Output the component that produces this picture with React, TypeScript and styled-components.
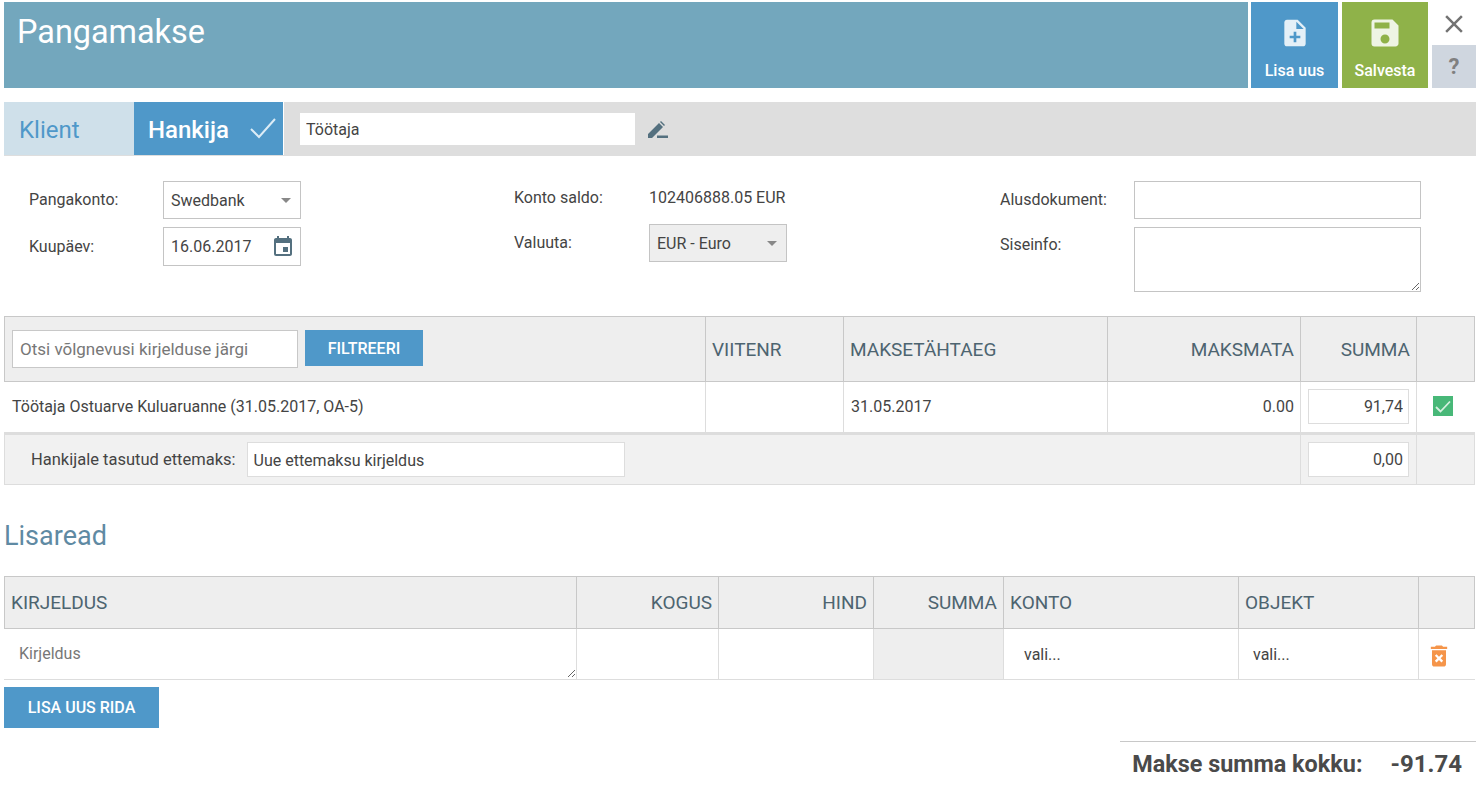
import React from 'react';
import styled, { createGlobalStyle } from 'styled-components';
import { MdNoteAdd, MdSave, MdClose, MdEvent, MdDeleteForever } from 'react-icons/md';

const GlobalStyle = createGlobalStyle`
  html, body { margin: 0; padding: 0; background: #fff; }
  body { font-family: Roboto, "Liberation Sans", sans-serif; color: #444; font-size: 16px; }
  * { box-sizing: border-box; }
  input, textarea, button { font-family: inherit; }
`;

const Page = styled.div`
  width: 1480px;
  height: 804px;
  padding: 2px 4px 0;
  overflow: hidden;
`;

const TopBar = styled.div`
  display: flex;
  height: 86px;
`;

const TitleBar = styled.div`
  width: 1244px;
  background: #73a7bd;
  color: #fff;
  font-size: 32.4px;
  line-height: 38px;
  padding: 11px 13px;
`;

const ActionButton = styled.div<{ $bg: string; $width: number; $gap: number }>`
  width: ${(p) => p.$width}px;
  margin-left: ${(p) => p.$gap}px;
  background: ${(p) => p.$bg};
  color: #fff;
  font-size: 16px;
  font-weight: 500;
  display: flex;
  flex-direction: column;
  align-items: center;
  padding-top: 15px;
  gap: 12px;
  svg { color: rgba(255, 255, 255, 0.85); }
`;

const IconSlot = styled.div`
  height: 32px;
  display: flex;
  align-items: center;
  justify-content: center;
`;

const SideActions = styled.div`
  width: 44px;
  margin-left: 4px;
  display: flex;
  flex-direction: column;
`;

const CloseBox = styled.div`
  height: 43px;
  display: flex;
  align-items: center;
  justify-content: center;
  color: #737373;
`;

const HelpBox = styled.div`
  height: 43px;
  background: #cfd6df;
  color: #808080;
  font-size: 22px;
  font-weight: 700;
  display: flex;
  align-items: center;
  justify-content: center;
`;

const PartyBar = styled.div`
  margin-top: 14px;
  height: 54px;
  background: #dedede;
  display: flex;
  align-items: stretch;
`;

const PartyTab = styled.div<{ $active?: boolean }>`
  width: ${(p) => (p.$active ? 150 : 130)}px;
  height: 53px;
  background: ${(p) => (p.$active ? '#4f98c9' : '#cfe0ea')};
  color: ${(p) => (p.$active ? '#fff' : '#4f98c9')};
  border-right: ${(p) => (p.$active ? '1px solid #fff' : '0')};
  font-size: 24px;
  font-weight: ${(p) => (p.$active ? 500 : 400)};
  display: flex;
  align-items: center;
  justify-content: space-between;
  padding: 2px 6px 0 ${(p) => (p.$active ? 14 : 15)}px;
  svg { margin-top: -3px; }
`;

const PartyInput = styled.input`
  width: 335px;
  height: 32px;
  margin: 11px 0 0 16px;
  border: 0;
  background: #fff;
  padding: 0 6px;
  font-size: 16px;
  color: #444;
  outline: none;
`;

const EditIcon = styled.div`
  margin: 19px 0 0 13px;
`;

const FormGrid = styled.div`
  margin-top: 25px;
  height: 135px;
  display: grid;
  grid-template-columns: 485px 485px 1fr;
`;

const FormColumn = styled.div<{ $left: number }>`
  padding-left: ${(p) => p.$left}px;
  display: flex;
  flex-direction: column;
  gap: 8px;
`;

const FormRow = styled.div<{ $height: number }>`
  display: flex;
  align-items: flex-start;
  height: ${(p) => p.$height}px;
`;

const FormLabel = styled.div<{ $width: number; $top?: number }>`
  width: ${(p) => p.$width}px;
  font-size: 16px;
  line-height: 18px;
  padding-top: ${(p) => p.$top ?? 10}px;
  color: #444;
`;

const FieldBox = styled.div<{ $width: number; $height: number; $disabled?: boolean }>`
  width: ${(p) => p.$width}px;
  height: ${(p) => p.$height}px;
  border: 1px solid #c4c4c4;
  background: ${(p) => (p.$disabled ? '#eee' : '#fff')};
  display: flex;
  align-items: center;
  justify-content: space-between;
  padding: 0 7px;
  font-size: 16px;
  color: #444;
`;

const Caret = styled.span`
  width: 0;
  height: 0;
  margin-right: 2px;
  border-left: 5px solid transparent;
  border-right: 5px solid transparent;
  border-top: 5px solid #888;
`;

const PlainValue = styled.div`
  font-size: 16px;
  line-height: 18px;
  padding-top: 8px;
`;

const TextArea = styled.textarea`
  display: block;
  width: 287px;
  height: 65px;
  border: 1px solid #c4c4c4;
  outline: none;
  background: #fff;
`;

const TextBox = styled.input`
  display: block;
  width: 287px;
  height: 38px;
  border: 1px solid #c4c4c4;
  outline: none;
  background: #fff;
`;

const Row = styled.div<{ $cols: string; $height: number; $bg?: string; $border: string; $top?: string; $thick?: boolean }>`
  display: grid;
  width: 1471px;
  grid-template-columns: ${(p) => p.$cols};
  height: ${(p) => p.$height}px;
  background: ${(p) => p.$bg ?? '#fff'};
  border-bottom: ${(p) => (p.$thick ? 3 : 1)}px solid ${(p) => p.$border};
  ${(p) => (p.$top ? `border-top: ${p.$top};` : '')}
  ${(p) => (p.$thick ? '& > div { padding-bottom: 2px; }' : '')}
`;

const Cell = styled.div<{ $right?: boolean; $line: string; $pad?: number; $bg?: string; $open?: boolean; $span?: number }>`
  display: flex;
  align-items: center;
  justify-content: ${(p) => (p.$right ? 'flex-end' : 'flex-start')};
  padding: 0 ${(p) => p.$pad ?? 6}px;
  border-right: 1px solid ${(p) => p.$line};
  font-size: 16px;
  color: #444;
  background: ${(p) => p.$bg ?? 'transparent'};
  min-width: 0;
  ${(p) => (p.$span ? `grid-column: 1 / span ${p.$span};` : '')}
  &:first-child { border-left: 1px solid ${(p) => (p.$open ? 'transparent' : p.$line)}; }
`;

const HeadText = styled.span`
  font-size: 19px;
  color: #4d6470;
`;

const SearchInput = styled.input`
  width: 286px;
  height: 38px;
  border: 1px solid #c8c8c8;
  background: #fff;
  padding: 0 7px;
  font-size: 17px;
  outline: none;
  &::placeholder { color: #777; opacity: 1; }
`;

const BlueButton = styled.button<{ $width: number; $height: number }>`
  width: ${(p) => p.$width}px;
  height: ${(p) => p.$height}px;
  border: 0;
  background: #4f98c9;
  color: #fff;
  font-size: 16px;
  font-weight: 500;
  padding: 0;
`;

const FilterGap = styled.div`
  display: flex;
  align-items: flex-start;
  gap: 7px;
`;

const AmountInput = styled.input`
  width: 101px;
  height: 35px;
  border: 1px solid #ddd;
  background: #fff;
  padding: 0 5px;
  text-align: right;
  font-size: 16px;
  color: #444;
  outline: none;
`;

const CheckMark = styled.div`
  width: 20px;
  height: 20px;
  background: #48b878;
  margin-left: 16px;
  display: flex;
  align-items: center;
  justify-content: center;
`;

const AdvanceLabel = styled.span`
  margin: 0 11px 0 26px;
  color: #444;
  font-size: 16.5px;
`;

const AdvanceInput = styled.input`
  width: 378px;
  height: 35px;
  border: 1px solid #ddd;
  background: #fff;
  padding: 1px 6px 0;
  font-size: 16px;
  color: #444;
  outline: none;
`;

const SectionTitle = styled.h2`
  margin: 34px 0 0;
  height: 57px;
  font-size: 27px;
  line-height: 34px;
  font-weight: 400;
  color: #5f8aa3;
`;

const DescriptionArea = styled.textarea`
  width: 100%;
  height: 48px;
  border: 0;
  outline: none;
  resize: vertical;
  padding: 14px 14px 0;
  font-size: 16px;
  background: transparent;
  &::placeholder { color: #777; opacity: 1; }
`;

const TrashWrap = styled.div`
  color: #f5954a;
  margin-top: 3px;
  display: flex;
`;

const AddRow = styled.div`
  margin-top: 7px;
  height: 41px;
`;

const TotalBar = styled.div`
  margin: 13px 0 0 1116px;
  border-top: 1px solid #c8c8c8;
  height: 46px;
  display: flex;
  justify-content: flex-end;
  align-items: center;
  padding: 0 14px 2px 0;
  font-weight: 700;
  color: #4a4a4a;
  gap: 28px;
`;

const TotalLabel = styled.span`
  font-size: 23.4px;
`;

const TotalValue = styled.span`
  font-size: 24px;
`;

const tableCols = '702px 138px 264px 193px 116px 1fr';
const extraCols = '573px 142px 155px 130px 235px 180px 1fr';
const HEAD_LINE = '#c8c8c8';
const BODY_LINE = '#ddd';

const App: React.FunctionComponent = () => {
  return (
    <Page>
      <GlobalStyle />
      <TopBar>
        <TitleBar>Pangamakse</TitleBar>
        <ActionButton $bg='#4f98c9' $width={87} $gap={3}>
          <IconSlot><MdNoteAdd size={32} /></IconSlot>
          <span>Lisa uus</span>
        </ActionButton>
        <ActionButton $bg='#8fb249' $width={86} $gap={4}>
          <IconSlot><MdSave size={36} /></IconSlot>
          <span>Salvesta</span>
        </ActionButton>
        <SideActions>
          <CloseBox>
            <MdClose size={30} />
          </CloseBox>
          <HelpBox>?</HelpBox>
        </SideActions>
      </TopBar>

      <PartyBar>
        <PartyTab>Klient</PartyTab>
        <PartyTab $active>
          Hankija
          <svg width='28' height='24' viewBox='0 0 28 24' fill='none' stroke='#dcecf6' strokeWidth='2'>
            <path d='M2 13l8 8L26 3' />
          </svg>
        </PartyTab>
        <PartyInput defaultValue='Töötaja' />
        <EditIcon>
          <svg width='20' height='17' viewBox='0 0 20 17'>
            <path fill='#54707f' d='M0 17v-4L11 2l4 4L4 17z M12 1l1-1 4 4-1 1z' />
            <rect x='9' y='14.5' width='11' height='2.5' fill='#54707f' />
          </svg>
        </EditIcon>
      </PartyBar>

      <FormGrid>
        <FormColumn $left={25}>
          <FormRow $height={38}>
            <FormLabel $width={134}>Pangakonto:</FormLabel>
            <FieldBox $width={138} $height={38}>
              Swedbank
              <Caret />
            </FieldBox>
          </FormRow>
          <FormRow $height={39}>
            <FormLabel $width={134} $top={11}>Kuupäev:</FormLabel>
            <FieldBox $width={138} $height={39}>
              16.06.2017
              <MdEvent size={24} color='#54707f' style={{ marginRight: -2 }} />
            </FieldBox>
          </FormRow>
        </FormColumn>
        <FormColumn $left={25}>
          <FormRow $height={35}>
            <FormLabel $width={135} $top={8}>Konto saldo:</FormLabel>
            <PlainValue>102406888.05 EUR</PlainValue>
          </FormRow>
          <FormRow $height={38}>
            <FormLabel $width={135} $top={10}>Valuuta:</FormLabel>
            <FieldBox $width={138} $height={38} $disabled>
              EUR - Euro
              <Caret />
            </FieldBox>
          </FormRow>
        </FormColumn>
        <FormColumn $left={26}>
          <FormRow $height={38}>
            <FormLabel $width={134}>Alusdokument:</FormLabel>
            <TextBox />
          </FormRow>
          <FormRow $height={65}>
            <FormLabel $width={134} $top={9}>Siseinfo:</FormLabel>
            <TextArea />
          </FormRow>
        </FormColumn>
      </FormGrid>

      <Row $cols={tableCols} $height={66} $bg='#eee' $border={HEAD_LINE} $top={`1px solid ${HEAD_LINE}`}>
        <Cell $line={HEAD_LINE} $pad={7}>
          <FilterGap>
            <SearchInput placeholder='Otsi võlgnevusi kirjelduse järgi' />
            <BlueButton $width={118} $height={36}>FILTREERI</BlueButton>
          </FilterGap>
        </Cell>
        <Cell $line={HEAD_LINE}><HeadText>VIITENR</HeadText></Cell>
        <Cell $line={HEAD_LINE}><HeadText>MAKSETÄHTAEG</HeadText></Cell>
        <Cell $line={HEAD_LINE} $right><HeadText>MAKSMATA</HeadText></Cell>
        <Cell $line={HEAD_LINE} $right><HeadText>SUMMA</HeadText></Cell>
        <Cell $line={HEAD_LINE} />
      </Row>
      <Row $cols={tableCols} $height={53} $border={BODY_LINE} $thick>
        <Cell $line={BODY_LINE} $pad={7} $open>Töötaja Ostuarve Kuluaruanne (31.05.2017, OA-5)</Cell>
        <Cell $line={BODY_LINE} />
        <Cell $line={BODY_LINE} $pad={7}>31.05.2017</Cell>
        <Cell $line={BODY_LINE} $right>0.00</Cell>
        <Cell $line={BODY_LINE} $pad={7}><AmountInput defaultValue='91,74' /></Cell>
        <Cell $line='#fff' $pad={0}>
          <CheckMark>
            <svg width='16' height='13' viewBox='0 0 16 13' fill='none' stroke='#d6f0e0' strokeWidth='1.8'>
              <path d='M1 7l4.5 4.5L15 1.5' />
            </svg>
          </CheckMark>
        </Cell>
      </Row>
      <Row $cols={tableCols} $height={50} $bg='#f1f1f1' $border={BODY_LINE}>
        <Cell $line={BODY_LINE} $pad={0} $span={4}>
          <AdvanceLabel>Hankijale tasutud ettemaks:</AdvanceLabel>
          <AdvanceInput defaultValue='Uue ettemaksu kirjeldus' />
        </Cell>
        <Cell $line={BODY_LINE} $pad={7}><AmountInput defaultValue='0,00' /></Cell>
        <Cell $line={BODY_LINE} />
      </Row>

      <SectionTitle>Lisaread</SectionTitle>

      <Row $cols={extraCols} $height={53} $bg='#eee' $border={HEAD_LINE} $top={`1px solid ${HEAD_LINE}`}>
        <Cell $line={HEAD_LINE}><HeadText>KIRJELDUS</HeadText></Cell>
        <Cell $line={HEAD_LINE} $right><HeadText>KOGUS</HeadText></Cell>
        <Cell $line={HEAD_LINE} $right><HeadText>HIND</HeadText></Cell>
        <Cell $line={HEAD_LINE} $right><HeadText>SUMMA</HeadText></Cell>
        <Cell $line={HEAD_LINE}><HeadText>KONTO</HeadText></Cell>
        <Cell $line={HEAD_LINE}><HeadText>OBJEKT</HeadText></Cell>
        <Cell $line={HEAD_LINE} />
      </Row>
      <Row $cols={extraCols} $height={51} $border={BODY_LINE}>
        <Cell $line={BODY_LINE} $pad={0} $open>
          <DescriptionArea placeholder='Kirjeldus' />
        </Cell>
        <Cell $line={BODY_LINE} />
        <Cell $line={BODY_LINE} />
        <Cell $line={BODY_LINE} $bg='#eee' />
        <Cell $line={BODY_LINE} $pad={20}>vali...</Cell>
        <Cell $line={BODY_LINE} $pad={14}>vali...</Cell>
        <Cell $line='#fff' $pad={6}>
          <TrashWrap><MdDeleteForever size={28} /></TrashWrap>
        </Cell>
      </Row>

      <AddRow>
        <BlueButton $width={155} $height={41}>LISA UUS RIDA</BlueButton>
      </AddRow>

      <TotalBar>
        <TotalLabel>Makse summa kokku:</TotalLabel>
        <TotalValue>-91.74</TotalValue>
      </TotalBar>
    </Page>
  );
};

export default App;
